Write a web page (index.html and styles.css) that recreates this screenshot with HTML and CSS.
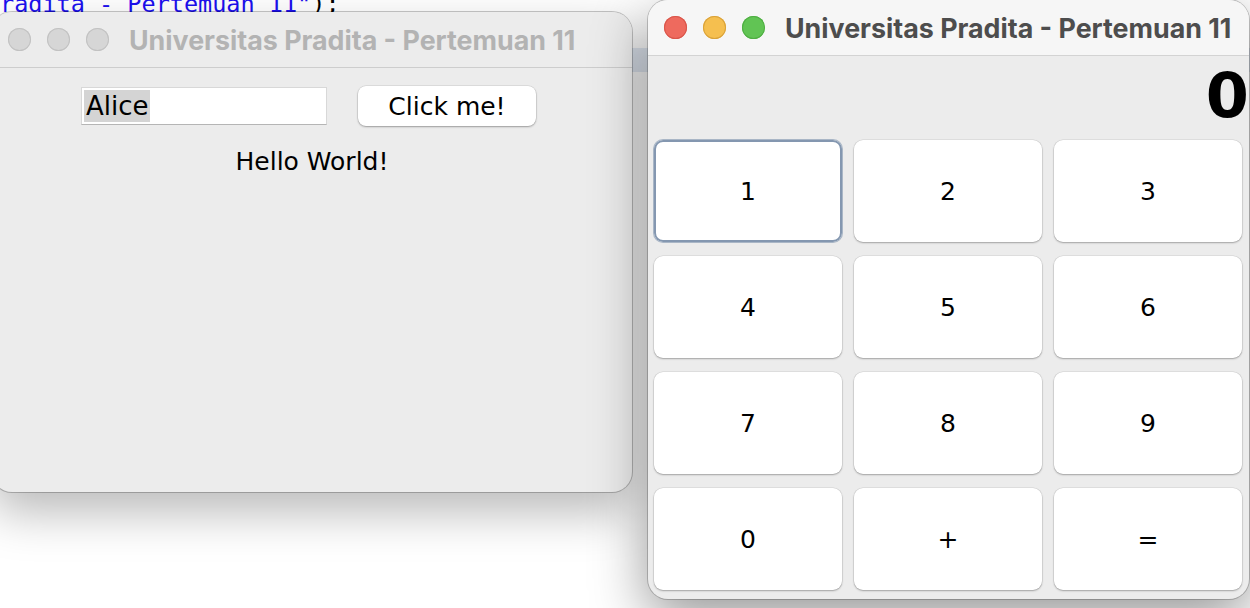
FILE: index.html
```html
<!DOCTYPE html>
<html>
<head>
<meta charset="utf-8">
<title>Universitas Pradita - Pertemuan 11</title>
<link rel="stylesheet" href="styles.css">
</head>
<body>
<div class="desktop">
  <div class="code-line"><span class="str">radita - Pertemuan 11"</span><span class="punc">);</span></div>
  <div class="current-line"></div>

  <div class="window win-hello">
    <div class="titlebar">
      <span class="light"></span><span class="light"></span><span class="light"></span>
      <span class="title">Universitas Pradita - Pertemuan 11</span>
    </div>
    <div class="hello-body">
      <div class="hello-row">
        <div class="textfield"><span class="sel">Alice</span></div>
        <button class="aqua-btn">Click me!</button>
      </div>
      <div class="hello-label">Hello World!</div>
    </div>
  </div>

  <div class="window win-calc active">
    <div class="titlebar">
      <span class="light red"></span><span class="light yellow"></span><span class="light green"></span>
      <span class="title">Universitas Pradita - Pertemuan 11</span>
    </div>
    <div class="calc-body">
      <div class="display">0</div>
      <div class="keys">
        <button class="key focus">1</button>
        <button class="key">2</button>
        <button class="key">3</button>
        <button class="key">4</button>
        <button class="key">5</button>
        <button class="key">6</button>
        <button class="key">7</button>
        <button class="key">8</button>
        <button class="key">9</button>
        <button class="key">0</button>
        <button class="key">+</button>
        <button class="key">=</button>
      </div>
    </div>
  </div>
</div>
</body>
</html>
```
FILE: styles.css
```css
html, body {
  margin: 0;
  padding: 0;
}
body {
  width: 1250px;
  height: 608px;
  overflow: hidden;
  background: #ffffff;
}
.desktop {
  position: relative;
  width: 1250px;
  height: 608px;
  overflow: hidden;
  background: #ffffff;
}
.code-line {
  position: absolute;
  left: 0;
  top: -8px;
  font-family: "DejaVu Sans Mono", monospace;
  font-size: 23.5px;
  line-height: 24px;
  white-space: pre;
}
.code-line .str { color: #1c10f0; }
.code-line .punc { color: #000000; }
.current-line {
  position: absolute;
  left: 0;
  top: 48px;
  width: 1250px;
  height: 24px;
  background: #e3eaf4;
}

.window {
  position: absolute;
  display: flex;
  flex-direction: column;
  border-radius: 20px;
  overflow: hidden;
  background: #ececec;
}
.win-hello {
  left: -8px;
  top: 12px;
  width: 640px;
  height: 480px;
  box-shadow: 0 0 0 1px rgba(0,0,0,0.22), 0 20px 48px rgba(0,0,0,0.28);
}
.win-calc {
  left: 648px;
  top: 0;
  width: 601px;
  height: 599px;
  box-shadow: 0 0 0 1px rgba(0,0,0,0.2), 0 18px 56px rgba(0,0,0,0.42);
}

.titlebar {
  flex: 0 0 55px;
  display: flex;
  align-items: center;
  padding-left: 16px;
  gap: 16px;
  border-bottom: 1px solid #cdcdcd;
  background: #ececec;
}
.win-calc .titlebar {
  background: #f6f6f6;
  border-bottom-color: #d3d3d3;
}
.light {
  width: 23px;
  height: 23px;
  border-radius: 50%;
  background: #d6d6d6;
  box-shadow: inset 0 0 0 1px #c2c2c2;
  flex: 0 0 auto;
}
.light.red { background: #ee6a5e; box-shadow: inset 0 0 0 1px #d9564b; }
.light.yellow { background: #f5bf4f; box-shadow: inset 0 0 0 1px #d9a23a; }
.light.green { background: #61c454; box-shadow: inset 0 0 0 1px #4fae43; }
.title {
  margin-left: 4px;
  font-family: Inter, "Liberation Sans", sans-serif;
  font-weight: 700;
  font-size: 26.8px;
  color: #b3b3b3;
  white-space: nowrap;
}
.win-calc .title { color: #4d4d4d; }

.hello-body {
  display: flex;
  flex-direction: column;
  align-items: center;
  padding-top: 18px;
  font-family: "DejaVu Sans", sans-serif;
  font-size: 25px;
  color: #000;
}
.hello-row {
  display: flex;
  align-items: center;
  gap: 31px;
  margin-right: 7px;
}
.textfield {
  box-sizing: border-box;
  width: 246px;
  height: 38px;
  background: #fff;
  border: 1px solid #d8d8d8;
  border-bottom-color: #b5b5b5;
  padding: 2px 2px;
  display: flex;
  align-items: stretch;
}
.sel {
  background: #d4d4d4;
  padding: 0 1px 0 2px;
  line-height: 32px;
  font-size: 26px;
}
.aqua-btn {
  box-sizing: border-box;
  width: 178px;
  height: 40px;
  border: none;
  border-radius: 8px;
  background: #fff;
  box-shadow: 0 0 0 0.5px rgba(0,0,0,0.12), 0 1px 2px rgba(0,0,0,0.3);
  font-family: "DejaVu Sans", sans-serif;
  font-size: 25px;
  color: #000;
  padding: 0;
}
.hello-label {
  margin-top: 20px;
  line-height: 32px;
}

.calc-body {
  flex: 1;
  display: flex;
  flex-direction: column;
  padding: 0 7px 9px 6px;
}
.display {
  height: 84px;
  display: flex;
  align-items: center;
  justify-content: flex-end;
  padding-right: 0;
  padding-bottom: 6px;
  box-sizing: border-box;
  font-family: "DejaVu Sans", sans-serif;
  font-weight: 700;
  font-size: 62px;
  color: #000;
  margin-right: -7px;
}
.keys {
  display: grid;
  grid-template-columns: repeat(3, 1fr);
  grid-template-rows: repeat(4, 102px);
  column-gap: 12px;
  row-gap: 14px;
}
.key {
  border: none;
  border-radius: 9px;
  background: #fff;
  box-shadow: 0 0 0 0.5px rgba(0,0,0,0.1), 0 1px 2px rgba(0,0,0,0.28);
  font-family: "DejaVu Sans", sans-serif;
  font-size: 25px;
  color: #000;
  padding: 0;
}
.key.focus {
  box-shadow: inset 0 0 0 2px #8497b0, 0 0 0 1px #a9b6c6;
}
```
